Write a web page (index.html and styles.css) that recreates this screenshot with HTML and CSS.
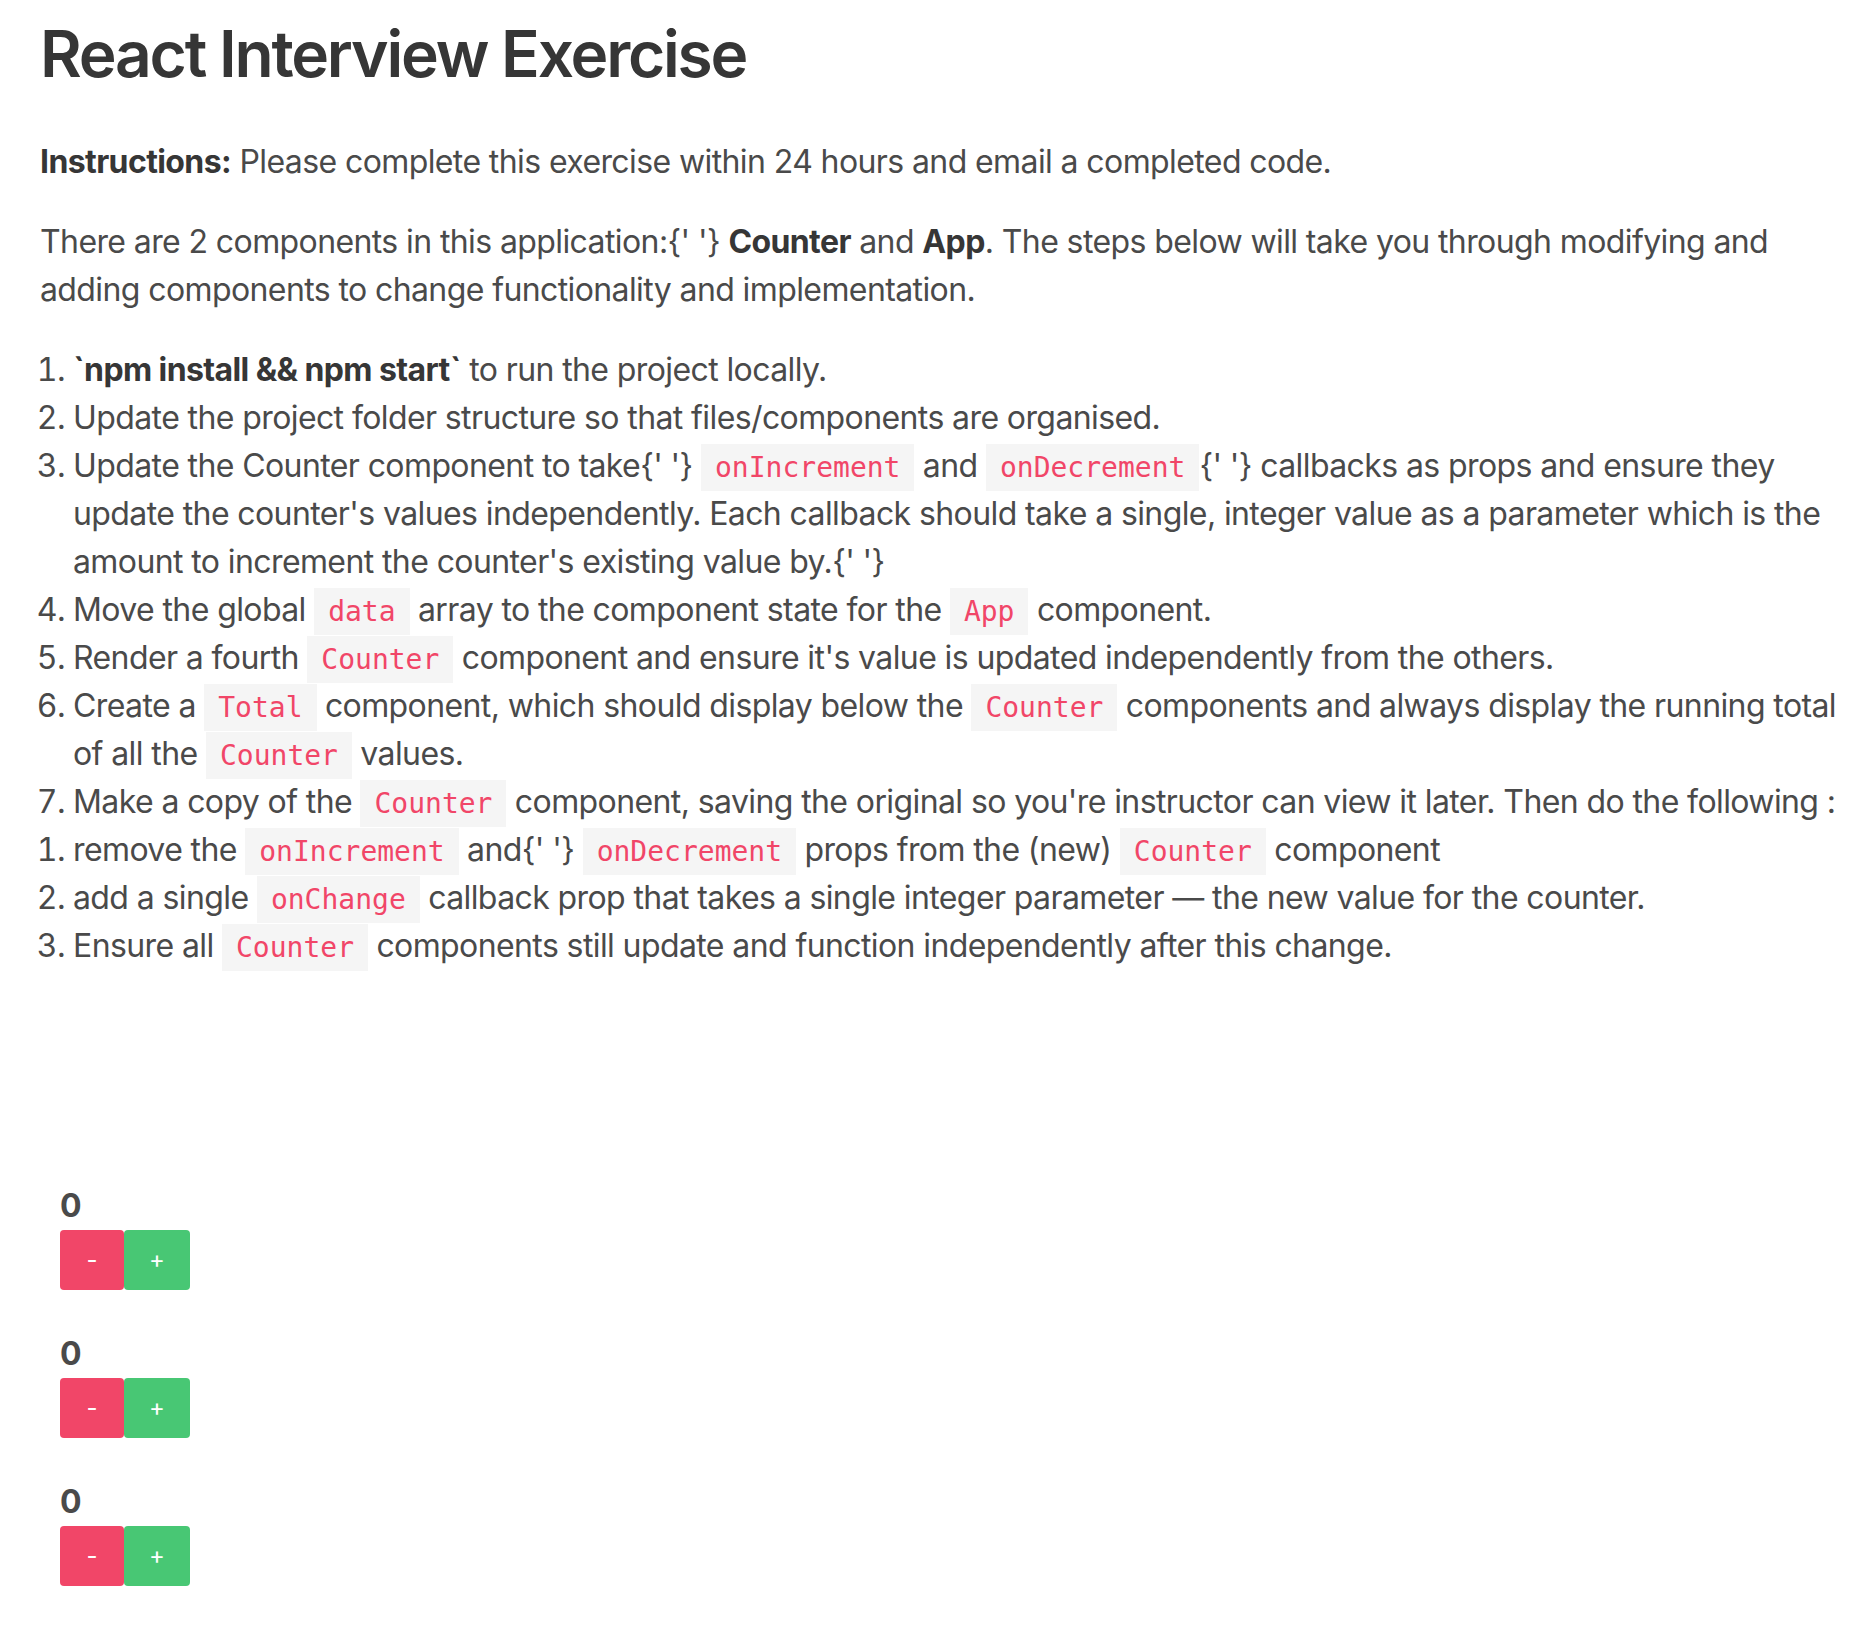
FILE: index.html
```html
<!DOCTYPE html>
<html lang="en">
<head>
<meta charset="utf-8">
<title>React Interview Exercise</title>
<link rel="stylesheet" href="styles.css">
</head>
<body>
<main class="page">
  <h1 class="title">React Interview Exercise</h1>
  <p class="para"><strong>Instructions:</strong> Please complete this exercise within 24 hours and email a completed code.</p>
  <p class="para">There are 2 components in this application:{' '} <strong>Counter</strong> and <strong>App</strong>. The steps below will take you through modifying and adding components to change functionality and implementation.</p>
  <ol class="steps">
    <li><strong>`npm install &amp;&amp; npm start`</strong> to run the project locally.</li>
    <li>Update the project folder structure so that files/components are organised.</li>
    <li>Update the Counter component to take{' '} <code class="code">onIncrement</code> and <code class="code">onDecrement</code>{' '} callbacks as props and ensure they update the counter's values independently. Each callback should take a single, integer value as a parameter which is the amount to increment the counter's existing value by.{' '}</li>
    <li>Move the global <code class="code">data</code> array to the component state for the <code class="code">App</code> component.</li>
    <li>Render a fourth <code class="code">Counter</code> component and ensure it's value is updated independently from the others.</li>
    <li>Create a <code class="code">Total</code> component, which should display below the <code class="code">Counter</code> components and always display the running total of all the <code class="code">Counter</code> values.</li>
    <li>Make a copy of the <code class="code">Counter</code> component, saving the original so you're instructor can view it later. Then do the following :</li>
  </ol>
  <ol class="steps steps-last">
    <li>remove the <code class="code">onIncrement</code> and{' '} <code class="code">onDecrement</code> props from the (new) <code class="code">Counter</code> component</li>
    <li>add a single <code class="code">onChange</code> callback prop that takes a single integer parameter — the new value for the counter.</li>
    <li>Ensure all <code class="code">Counter</code> components still update and function independently after this change.</li>
  </ol>

  <section class="counters">
    <div class="counter">
      <div class="count">0</div>
      <div class="buttons">
        <button class="btn btn-dec">-</button>
        <button class="btn btn-inc">+</button>
      </div>
    </div>
    <div class="counter">
      <div class="count">0</div>
      <div class="buttons">
        <button class="btn btn-dec">-</button>
        <button class="btn btn-inc">+</button>
      </div>
    </div>
    <div class="counter">
      <div class="count">0</div>
      <div class="buttons">
        <button class="btn btn-dec">-</button>
        <button class="btn btn-inc">+</button>
      </div>
    </div>
  </section>
</main>
</body>
</html>
```

FILE: styles.css
```css
html, body {
  margin: 0;
  padding: 0;
  background: #ffffff;
}

body {
  font-family: Inter, "Noto Sans", "Liberation Sans", sans-serif;
  color: #4a4a4a;
  font-size: 32px;
  line-height: 48px;
  letter-spacing: -0.6px;
}

.page {
  padding: 18px 12px 40px 40px;
}

.title {
  margin: 0 0 48px;
  font-size: 64px;
  line-height: 72px;
  font-weight: 600;
  color: #363636;
  letter-spacing: -2.2px;
}

.para {
  margin: 0 0 32px;
}

strong {
  color: #363636;
  font-weight: 700;
}

.steps {
  margin: 0;
  padding: 0 0 0 33px;
}

.steps li {
  margin: 0;
}

.code {
  font-family: "DejaVu Sans Mono", "Liberation Mono", monospace;
  font-size: 28px;
  line-height: 1;
  letter-spacing: normal;
  color: #f14668;
  background: #f5f5f5;
  padding: 7px 14px;
  font-weight: 400;
}

.counters {
  margin-top: 212px;
  padding-left: 20px;
  display: flex;
  flex-direction: column;
  gap: 40px;
}

.count {
  font-size: 32px;
  line-height: 48px;
  font-weight: 700;
  color: #4a4a4a;
}

.buttons {
  display: flex;
}

.btn {
  height: 60px;
  border: none;
  border-radius: 4px;
  color: #ffffff;
  font-family: Inter, "Noto Sans", sans-serif;
  font-size: 24px;
  line-height: 1;
  padding: 0;
  display: flex;
  align-items: center;
  justify-content: center;
}

.btn-dec {
  width: 64px;
  background: #f14668;
}

.btn-inc {
  width: 66px;
  background: #48c774;
}
```
